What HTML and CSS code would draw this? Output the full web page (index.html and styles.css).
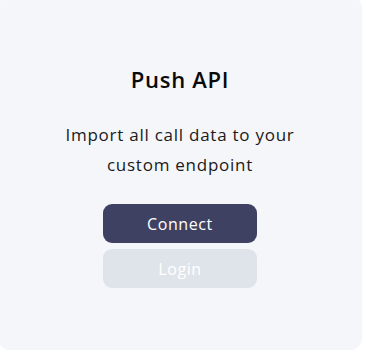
FILE: index.html
```html
<!DOCTYPE html>
<html>
<head>
<meta charset="utf-8">
<link rel="stylesheet" href="styles.css">
</head>
<body>
<div class="card">
  <h2 class="title">Push API</h2>
  <p class="desc">Import all call data to your custom endpoint</p>
  <div class="actions">
    <button class="btn btn-primary">Connect</button>
    <button class="btn btn-disabled">Login</button>
  </div>
</div>
</body>
</html>
```
FILE: styles.css
```css
html, body {
  margin: 0;
  padding: 0;
  background: #ffffff;
}
body {
  font-family: "Open Sans", "Noto Sans", sans-serif;
  overflow: hidden;
}
.card {
  box-sizing: border-box;
  margin: -4px 0 0 -2px;
  width: 364px;
  height: 354px;
  background: #f5f6fa;
  border-radius: 12px;
  display: flex;
  flex-direction: column;
  align-items: center;
  padding-top: 68px;
}
.title {
  margin: 0;
  font-size: 22px;
  font-weight: 600;
  line-height: 30px;
  letter-spacing: 0.7px;
  color: #0a0a0a;
}
.desc {
  margin: 26px 0 0;
  width: 260px;
  text-align: center;
  font-size: 17px;
  line-height: 30px;
  letter-spacing: 0.75px;
  color: #1a1a1a;
}
.actions {
  margin-top: 24px;
  display: flex;
  flex-direction: column;
  gap: 6px;
}
.btn {
  width: 154px;
  height: 39px;
  border: none;
  border-radius: 9px;
  font-family: inherit;
  font-size: 16px;
  letter-spacing: 0.6px;
  color: #ffffff;
}
.btn-primary {
  background: #3f4163;
}
.btn-disabled {
  background: #dfe3ea;
}
```
